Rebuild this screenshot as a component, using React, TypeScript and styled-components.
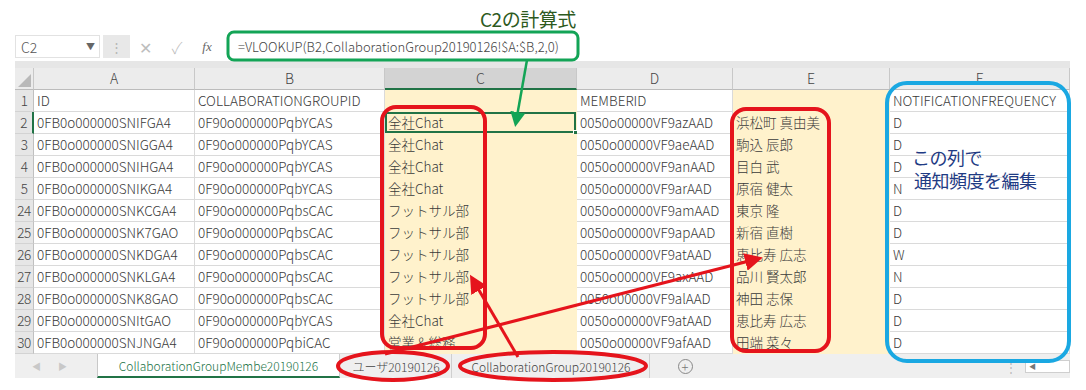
import React from "react";
import styled, { createGlobalStyle } from "styled-components";

const GlobalStyle = createGlobalStyle`
  *, *::before, *::after {
    box-sizing: border-box;
  }
  html, body {
    margin: 0;
    background: #fff;
  }
  body {
    font-family: "Noto Sans CJK JP", "Noto Sans", sans-serif;
    font-weight: 300;
  }
`;

const Page = styled.div`
  position: relative;
  width: 1086px;
  height: 390px;
  overflow: hidden;
  background: #fff;
`;

const Caption = styled.div`
  height: 32px;
  padding: 7px 0 0 480px;
  font-size: 19px;
  line-height: 24px;
  color: #2d5a1e;
  letter-spacing: -0.5px;
  font-weight: 400;
`;

const Sheet = styled.div`
  margin-left: 15px;
  width: 1055px;
  background: #e6e6e6;
`;

const FormulaBar = styled.div`
  display: flex;
  align-items: center;
  height: 29px;
  background: #fff;
`;

const NameBox = styled.div`
  width: 85px;
  height: 23px;
  display: flex;
  align-items: center;
  justify-content: space-between;
  padding: 0 4px 0 5px;
  border: 1px solid #e2e2e2;
  font-size: 14px;
  color: #555;
`;

const Caret = styled.span`
  font-size: 9px;
  color: #666;
`;

const Grip = styled.div`
  width: 27px;
  height: 23px;
  margin-left: 3px;
  background: #e8e8e8;
  display: flex;
  align-items: center;
  justify-content: center;
  color: #b5b5b5;
  font-size: 13px;
`;

const ToolIcon = styled.span<{ $w: number; $dark?: boolean }>`
  width: ${(p) => p.$w}px;
  text-align: center;
  font-size: ${(p) => (p.$dark ? 13 : 16)}px;
  font-family: ${(p) => (p.$dark ? '"Liberation Serif", serif' : "inherit")};
  font-style: ${(p) => (p.$dark ? "italic" : "normal")};
  color: ${(p) => (p.$dark ? "#666" : "#bdbdbd")};
`;

const FormulaInput = styled.div`
  flex: 1;
  height: 29px;
  margin-left: 7px;
  padding-left: 10px;
  display: flex;
  align-items: center;
  font-size: 13px;
  color: #444;
  white-space: nowrap;
`;

const Band = styled.div`
  height: 7px;
`;

const Grid = styled.div`
  display: grid;
  grid-template-columns: 19px 161px 190px 192px 156px 157px 180px;
  grid-auto-rows: 22px;
`;

const Corner = styled.div`
  position: relative;
  background: #ececec;
  border-right: 1px solid #c8c8c8;
  border-bottom: 1px solid #bcbcbc;

  &::after {
    content: "";
    position: absolute;
    right: 2px;
    bottom: 2px;
    border-left: 13px solid transparent;
    border-bottom: 13px solid #b9b9b9;
  }
`;

const ColHead = styled.div<{ $active?: boolean }>`
  background: ${(p) => (p.$active ? "#d3d3d3" : "#ececec")};
  border-right: 1px solid #c8c8c8;
  border-bottom: ${(p) => (p.$active ? "2px solid #217346" : "1px solid #bcbcbc")};
  text-align: center;
  font-size: 14px;
  line-height: 21px;
  color: #444;
`;

const RowHead = styled.div<{ $active?: boolean }>`
  background: #e6e6e6;
  border-right: ${(p) => (p.$active ? "2px solid #217346" : "1px solid #c0c0c0")};
  border-bottom: 1px solid #d3d3d3;
  text-align: center;
  font-size: 13.5px;
  line-height: 21px;
  color: #444;
  letter-spacing: -0.5px;
`;

const Cell = styled.div<{ $tint?: boolean; $selected?: boolean }>`
  position: relative;
  padding-left: 3px;
  background: ${(p) => (p.$tint ? "#fff2cc" : "#fff")};
  border-right: 1px solid ${(p) => (p.$tint ? "#fff2cc" : "#dadada")};
  border-bottom: 1px solid ${(p) => (p.$tint ? "#fff2cc" : "#dadada")};
  font-size: 13.5px;
  line-height: 21px;
  color: #3a3a3a;
  white-space: nowrap;
  box-shadow: ${(p) => (p.$selected ? "inset 0 0 0 2px #217346" : "none")};

  ${(p) =>
    p.$selected &&
    `
    &::after {
      content: "";
      position: absolute;
      right: -3px;
      bottom: -3px;
      width: 6px;
      height: 6px;
      background: #217346;
      border: 1px solid #fff;
    }
  `}
`;

const TabBar = styled.div`
  display: flex;
  align-items: stretch;
  height: 24px;
  background: #efefef;
  font-size: 12px;
  color: #444;
`;

const NavArrows = styled.div`
  width: 82px;
  display: flex;
  align-items: center;
  gap: 17px;
  padding-left: 17px;
  color: #c8c8c8;
  font-size: 9px;
`;

const SheetTab = styled.div<{ $active?: boolean; $w: number }>`
  width: ${(p) => p.$w}px;
  display: flex;
  align-items: center;
  justify-content: center;
  white-space: nowrap;
  background: ${(p) => (p.$active ? "#fff" : "transparent")};
  color: ${(p) => (p.$active ? "#217346" : "#444")};
  border-left: 1px solid ${(p) => (p.$active ? "#c8c8c8" : "transparent")};
  border-right: 1px solid #cfcfcf;
  border-bottom: ${(p) => (p.$active ? "2px solid #217346" : "none")};
`;

const AddSheet = styled.div`
  width: 70px;
  display: flex;
  align-items: center;
  justify-content: center;
  color: #777;
`;

const AddCircle = styled.span`
  width: 15px;
  height: 15px;
  border: 1px solid #888;
  border-radius: 50%;
  display: flex;
  align-items: center;
  justify-content: center;
  font-size: 13px;
  line-height: 1;
`;

const ScrollArea = styled.div`
  margin-left: auto;
  display: flex;
  align-items: center;
  gap: 8px;
  color: #bbb;
`;

const ScrollBox = styled.div`
  width: 45px;
  height: 13px;
  background: #fff;
  border: 1px solid #cfcfcf;
  font-size: 7px;
  color: #777;
  padding-left: 3px;
  display: flex;
  align-items: center;
`;

const Note = styled.div`
  position: absolute;
  left: 912px;
  top: 146px;
  font-size: 18px;
  line-height: 23px;
  font-weight: 400;
  color: #1f3b84;
  letter-spacing: -0.5px;
`;

const NoteLine = styled.div<{ $indent?: number }>`
  padding-left: ${(p) => p.$indent ?? 0}px;
`;

const Overlay = styled.svg`
  position: absolute;
  left: 0;
  top: 0;
  pointer-events: none;
`;

const columns = ["A", "B", "C", "D", "E", "F"];
const tinted = [false, false, true, false, true, false];

const rows: string[][] = [
  ["1", "ID", "COLLABORATIONGROUPID", "", "MEMBERID", "", "NOTIFICATIONFREQUENCY"],
  ["2", "0FB0o000000SNIFGA4", "0F90o000000PqbYCAS", "全社Chat", "0050o00000VF9azAAD", "浜松町 真由美", "D"],
  ["3", "0FB0o000000SNIGGA4", "0F90o000000PqbYCAS", "全社Chat", "0050o00000VF9aeAAD", "駒込 辰郎", "D"],
  ["4", "0FB0o000000SNIHGA4", "0F90o000000PqbYCAS", "全社Chat", "0050o00000VF9anAAD", "目白 武", "D"],
  ["5", "0FB0o000000SNIKGA4", "0F90o000000PqbYCAS", "全社Chat", "0050o00000VF9arAAD", "原宿 健太", "N"],
  ["24", "0FB0o000000SNKCGA4", "0F90o000000PqbsCAC", "フットサル部", "0050o00000VF9amAAD", "東京 隆", "D"],
  ["25", "0FB0o000000SNK7GAO", "0F90o000000PqbsCAC", "フットサル部", "0050o00000VF9apAAD", "新宿 直樹", "D"],
  ["26", "0FB0o000000SNKDGA4", "0F90o000000PqbsCAC", "フットサル部", "0050o00000VF9atAAD", "恵比寿 広志", "W"],
  ["27", "0FB0o000000SNKLGA4", "0F90o000000PqbsCAC", "フットサル部", "0050o00000VF9axAAD", "品川 賢太郎", "N"],
  ["28", "0FB0o000000SNK8GAO", "0F90o000000PqbsCAC", "フットサル部", "0050o00000VF9alAAD", "神田 志保", "D"],
  ["29", "0FB0o000000SNItGAO", "0F90o000000PqbYCAS", "全社Chat", "0050o00000VF9atAAD", "恵比寿 広志", "D"],
  ["30", "0FB0o000000SNJNGA4", "0F90o000000PqbiCAC", "営業＆総務", "0050o00000VF9afAAD", "田端 菜々", "D"],
];

const RED = "#e5141c";
const GREEN = "#13a456";
const BLUE = "#1aa8e2";

const Annotations = () => (
  <Overlay width={1086} height={390} viewBox="0 0 1086 390">
    <defs>
      <marker id="redHead" markerWidth="6" markerHeight="6" refX="4" refY="3" orient="auto" markerUnits="strokeWidth">
        <path d="M0,0 L6,3 L0,6 Z" fill={RED} />
      </marker>
      <marker id="greenHead" markerWidth="6" markerHeight="6" refX="4" refY="3" orient="auto" markerUnits="strokeWidth">
        <path d="M0,0 L6,3 L0,6 Z" fill={GREEN} />
      </marker>
    </defs>
    {/* formula outline + arrow */}
    <rect x={228} y={32} width={350} height={28} rx={6} fill="none" stroke={GREEN} strokeWidth={3} />
    <line x1={527} y1={60} x2={516} y2={122} stroke={GREEN} strokeWidth={2.5} markerEnd="url(#greenHead)" />
    {/* column outlines */}
    <rect x={382} y={107} width={103} height={241} rx={14} fill="none" stroke={RED} strokeWidth={4} />
    <rect x={732} y={109} width={97} height={242} rx={14} fill="none" stroke={RED} strokeWidth={4} />
    <rect x={887} y={83} width={182} height={278} rx={20} fill="none" stroke={BLUE} strokeWidth={4} />
    {/* sheet tab ellipses */}
    <ellipse cx={393} cy={366} rx={55} ry={14} fill="none" stroke={RED} strokeWidth={4} />
    <ellipse cx={553} cy={366} rx={93} ry={14} fill="none" stroke={RED} strokeWidth={4} />
    {/* arrows */}
    <line x1={385} y1={354} x2={757} y2={259} stroke={RED} strokeWidth={3} markerEnd="url(#redHead)" />
    <line x1={518} y1={357} x2={473} y2={280} stroke={RED} strokeWidth={3} markerEnd="url(#redHead)" />
  </Overlay>
);

export default function App() {
  return (
    <>
      <GlobalStyle />
      <Page>
        <Caption>C2の計算式</Caption>
        <Sheet>
          <FormulaBar>
            <NameBox>
              C2
              <Caret>▼</Caret>
            </NameBox>
            <Grip>⋮</Grip>
            <ToolIcon $w={31}>✕</ToolIcon>
            <ToolIcon $w={32}>✓</ToolIcon>
            <ToolIcon $w={28} $dark>
              fx
            </ToolIcon>
            <FormulaInput>=VLOOKUP(B2,CollaborationGroup20190126!$A:$B,2,0)</FormulaInput>
          </FormulaBar>
          <Band />
          <Grid>
            <Corner />
            {columns.map((c) => (
              <ColHead key={c} $active={c === "C"}>
                {c}
              </ColHead>
            ))}
            {rows.map((r) => (
              <React.Fragment key={r[0]}>
                <RowHead $active={r[0] === "2"}>{r[0]}</RowHead>
                {r.slice(1).map((v, i) => (
                  <Cell key={i} $tint={tinted[i]} $selected={r[0] === "2" && i === 2}>
                    {v}
                  </Cell>
                ))}
              </React.Fragment>
            ))}
          </Grid>
          <TabBar>
            <NavArrows>
              <span>◀</span>
              <span>▶</span>
            </NavArrows>
            <SheetTab $active $w={243}>
              CollaborationGroupMembe20190126
            </SheetTab>
            <SheetTab $w={112}>ユーザ20190126</SheetTab>
            <SheetTab $w={198}>CollaborationGroup20190126</SheetTab>
            <AddSheet>
              <AddCircle>+</AddCircle>
            </AddSheet>
            <ScrollArea>
              <span>⋮</span>
              <ScrollBox>◀</ScrollBox>
            </ScrollArea>
          </TabBar>
        </Sheet>
        <Note>
          <NoteLine>この列で</NoteLine>
          <NoteLine $indent={2}>通知頻度を編集</NoteLine>
        </Note>
        <Annotations />
      </Page>
    </>
  );
}
